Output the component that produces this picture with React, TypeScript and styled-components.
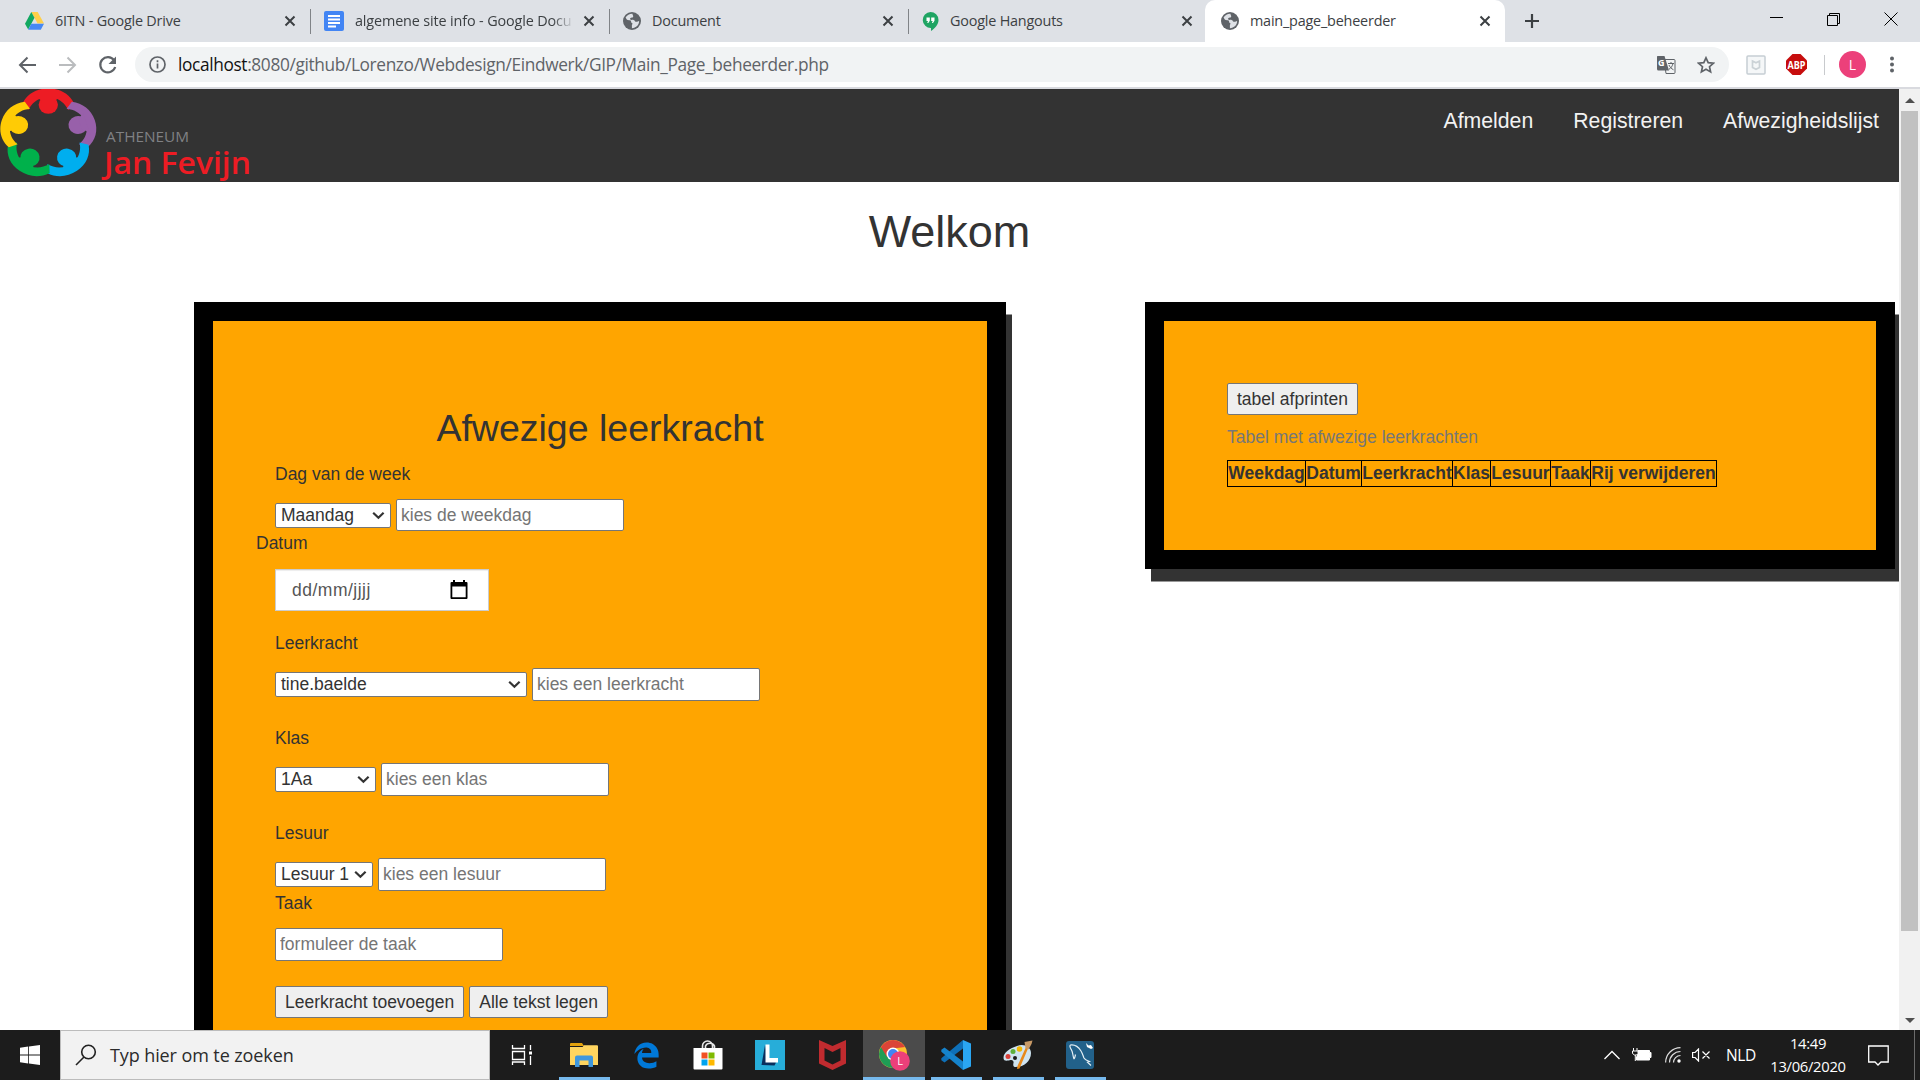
import React from "react";
import styled, { createGlobalStyle } from "styled-components";
import { FaEdgeLegacy } from "react-icons/fa6";

const Global = createGlobalStyle`
  * { box-sizing: border-box; }
  body { margin: 0; overflow: hidden; background: #fff; }
`;
const ui = `"Open Sans", "Noto Sans", sans-serif`;
const arial = `"Liberation Sans", Arial, sans-serif`;

const Screen = styled.div`
  width: 1920px; height: 1080px; display: flex; flex-direction: column; overflow: hidden;
  font-family: ${ui};
`;

/* browser chrome */
const TabStrip = styled.div`
  height: 42px; flex: none; background: #dee1e6; display: flex; padding-left: 12px;
`;
const Tab = styled.div<{ $active?: boolean; $line?: boolean }>`
  width: ${p => (p.$active ? 300 : 299)}px; height: 42px; display: flex; align-items: center;
  padding: 0 ${p => (p.$active ? 14 : 15)}px 0 ${p => (p.$active ? 16 : 13)}px; gap: 11px; color: #3c4043;
  margin-left: ${p => (p.$active ? -3 : 0)}px;
  background: ${p => (p.$active ? "#fff" : "transparent")};
  border-radius: 10px 10px 0 0;
  ${p => p.$line && `background: linear-gradient(#808387, #808387) 298px 9px / 1px 25px no-repeat; border-radius: 0;`}
  svg { flex: none; }
`;
const TabText = styled.span<{ $ls?: number; $fade?: boolean }>`
  flex: 1; font-size: 14.4px; line-height: 20px; white-space: nowrap; overflow: hidden;
  letter-spacing: ${p => p.$ls ?? -0.2}px;
  ${p => p.$fade && `-webkit-mask-image: linear-gradient(90deg, #000 91%, transparent 101%);`}
`;
const NewTab = styled.div`width: 54px; display: flex; align-items: center; justify-content: center;`;
const WinButtons = styled.div`
  margin-left: auto; display: flex; height: 37px; align-items: center;
`;
const WinButton = styled.div`width: 57px; display: flex; justify-content: center; position: relative; left: -1px;`;

const Toolbar = styled.div`
  height: 47px; flex: none; background: #fff; border-bottom: 2px solid #d9dadf;
  display: flex; align-items: center; padding: 0 15px 0 15px;
`;
const NavButtons = styled.div`display: flex; gap: 16px; width: 120px; svg { flex: none; }`;
const Omnibox = styled.div`
  width: 1594px; height: 35px; border-radius: 18px; background: #f1f3f4; display: flex; align-items: center;
  padding: 0 14px 0 14px; svg { flex: none; }
`;
const Url = styled.div`
  flex: 1; margin-left: 12px; font-size: 17.3px; letter-spacing: -0.36px; color: #5f6368; white-space: nowrap;
  b { font-weight: 400; color: #111; }
`;
const OmniIcons = styled.div`display: flex; gap: 21px; align-items: center;`;
const Extensions = styled.div`
  display: flex; align-items: center; margin-left: 17px; svg { flex: none; }
`;
const Glyph = styled.span<{ $ml: number }>`display: flex; flex: none; margin-left: ${p => p.$ml}px;`;
const ToolSep = styled.i`width: 1px; height: 20px; background: #c8cacd; margin: 0 14px 0 17px;`;
const Avatar = styled.div`
  width: 27px; height: 27px; border-radius: 50%; background: #ec407a; color: #fff; font-size: 14px;
  display: flex; align-items: center; justify-content: center; margin-right: 18px;
`;

/* page */
const Viewport = styled.div`height: 941px; flex: none; display: flex; overflow: hidden;`;
const Page = styled.div`
  width: 1899px; flex: none; overflow: hidden; font-family: ${arial}; color: #333; font-size: 17.5px; line-height: 25px;
`;
const Header = styled.header`
  height: 93px; background: #333; display: flex; justify-content: space-between; overflow: hidden;
`;
const Nav = styled.nav`
  display: flex; gap: 40px; padding: 17px 20px 0 0; color: #f2f2f2; font-size: 21.25px; line-height: 30px;
`;
const Title = styled.h1`
  margin: 25px 0 0; height: 50px; font-weight: 400; font-size: 45px; line-height: 50px; text-align: center;
`;
const Columns = styled.main`display: flex; align-items: flex-start; padding: 45px 0 0 194px; gap: 139px;`;
const Card = styled.section<{ $w: number; $h: number }>`
  width: ${p => p.$w}px; height: ${p => p.$h}px; flex: none; border: 19px solid #000; background: orange;
  box-shadow: 6px 12.5px 0 #333;
`;
const FormCard = styled(Card)`padding: 87px 62px 0;`;
const TableCard = styled(Card)`padding: 62px 63px;`;
const FormTitle = styled.h2`
  margin: 0 0 13px; font-size: 37.5px; font-weight: 400; line-height: 41px; text-align: center;
`;
const Field = styled.div<{ $after: number; $gap?: number }>`
  display: flex; flex-direction: column; align-items: flex-start; gap: ${p => p.$gap ?? 12}px;
  margin-bottom: ${p => p.$after}px;
`;
const Label = styled.label<{ $out?: boolean }>`height: 25px; margin-left: ${p => (p.$out ? -19 : 0)}px;`;
const Controls = styled.div`display: flex; align-items: center; gap: 5px;`;
const SelectBox = styled.div<{ $w: number }>`
  width: ${p => p.$w}px; height: 25px; border: 1px solid #767676; border-radius: 2px; background: #fff;
  display: flex; align-items: center; justify-content: space-between; padding: 0 5px; line-height: 21px;
  white-space: nowrap; svg { flex: none; }
`;
const Input = styled.input<{ $h?: number }>`
  width: 228px; height: ${p => p.$h ?? 33}px; border: 1px solid #767676; border-radius: 2px; padding: 0 4px;
  font: 17.5px ${arial}; background: #fff; outline: none;
  &::placeholder { color: #757575; opacity: 1; }
`;
const DateBox = styled.div`
  width: 214px; height: 42px; border: 1px solid #ccc; background: #fff; color: #555; display: flex;
  align-items: center; justify-content: space-between; padding: 0 20px 0 16px;
  box-shadow: inset 0 1px 1px rgba(0, 0, 0, 0.075);
  span { letter-spacing: 0.5px; }
`;
const Button = styled.button`
  height: 32px; border: 1px solid #767676; border-radius: 2px; background: #efefef; color: #333;
  font: 17.5px ${arial}; padding: 0 9px; white-space: nowrap;
`;
const Table = styled.table`
  border-collapse: collapse; line-height: 25px;
  caption { text-align: left; color: #777; padding: 10px 0; white-space: nowrap; }
`;
const Th = styled.th<{ $w: number }>`
  width: ${p => p.$w}px; min-width: ${p => p.$w}px; border: 1px solid #000; padding: 0; font-weight: 700;
  white-space: nowrap;
`;
const Scrollbar = styled.div`
  width: 21px; background: #f1f1f1; display: flex; flex-direction: column; align-items: center; padding: 9px 0 7px;
`;
const Thumb = styled.div`width: 17px; height: 820px; background: #c1c1c1; margin: 8px 0 auto;`;
const Arrow = styled.i<{ $down?: boolean }>`
  border: 5px solid transparent; border-top-width: ${p => (p.$down ? 5 : 0)}px;
  border-bottom-width: ${p => (p.$down ? 0 : 5)}px;
  ${p => (p.$down ? "border-top-color" : "border-bottom-color")}: #505050;
`;

/* taskbar */
const Taskbar = styled.footer`
  height: 50px; flex: none; background: #1c1c1c; display: flex; color: #fff;
`;
const Start = styled.div`width: 60px; display: flex; align-items: center; justify-content: center;`;
const Search = styled.div`
  width: 430px; height: 50px; border: 1px solid #bcbcbc; background: #f2f2f2; display: flex; align-items: center;
  padding-left: 14px; gap: 13px; color: #2b2b2b; font-size: 18px; letter-spacing: -0.1px;
`;
const AppButton = styled.div<{ $open?: boolean; $active?: boolean }>`
  width: 62px; height: 50px; display: flex; align-items: center; justify-content: center;
  background: ${p => (p.$active ? "#4b4b4b" : "transparent")};
  ${p => p.$open && `background: linear-gradient(#76b9ed, #76b9ed) 6px 47px / 51px 3px no-repeat;`}
  ${p => p.$active && `border-bottom: 3px solid #76b9ed; padding-top: 3px;`}
`;
const Apps = styled.div`display: flex; padding-left: 1px;`;
const Tray = styled.div`
  margin-left: auto; display: flex; align-items: center; font-size: 15px; svg { flex: none; }
`;
const Lang = styled.span`width: 30px; margin-left: 15px; letter-spacing: -0.4px; font-size: 15.5px;`;
const Clock = styled.div`
  width: 84px; margin-left: 10px; text-align: center; line-height: 23px; font-size: 14.8px; letter-spacing: -0.3px;
  white-space: nowrap;
`;
const ShowDesktop = styled.i`height: 50px; width: 6px; border-left: 1px solid #6b6b6b; margin-left: 25px;`;

const Close = () => (
  <svg width="12" height="12" viewBox="0 0 12 12"><path d="M1.5 1.5l9 9M10.500 1.500l-9 9" stroke="#3c4043" strokeWidth="2" /></svg>
);
const Globe = () => (
  <svg width="18" height="18" viewBox="0 0 18 18">
    <circle cx="9" cy="9" r="9" fill="#5f6368" />
    <path d="M9.5 1.8C7 1.6 4 3 2.6 5.6c.8 1 .7 2.200 2 2.500 1.500.3 2.500-.3 3.300.8.6 1-.3 1.500 1 2 .8.3.6 1 .2 1.700-.5 1 0 2.200-.2 3.600 4.200-.2 7.300-3.400 7.200-7.200-1.400.3-2 1.100-3.300.7-1.200-.4-1-1.600-2.300-1.800-1.500-.2-2.800.5-3.300-.6-.4-1 .5-1.800 1.700-1.800.9 0 1.400-.3 1.300-1.200-.1-.9-.8-1.500-.7-2.500z" fill="#dee1e6" />
  </svg>
);
const Drive = () => (
  <svg width="19" height="18" viewBox="0 0 19 18">
    <path d="M6.300 0h6.400l6.300 11.500h-6.400z" fill="#ffcf48" />
    <path d="M6.300 0L9.500 5.800 3.200 17.500 0 11.800z" fill="#11a861" />
    <path d="M6.300 11.800H19L15.800 17.800H3.200z" fill="#4688f4" />
  </svg>
);
const Docs = () => (
  <svg width="20" height="20" viewBox="0 0 20 20"><rect width="20" height="20" rx="2" fill="#4285f4" />
    <path d="M4 5h12M4 8.500h12M4 12h12M4 15.500h8" stroke="#fff" strokeWidth="1.900" /></svg>
);
const Hangouts = () => (
  <svg width="17" height="19" viewBox="0 0 17 19"><path d="M8.500 0a8 8 0 0 1 8 8c0 4.500-3.500 8.500-7.500 11v-3A8 8 0 1 1 8.500 0z" fill="#1fa463" />
    <path d="M4.500 5.500h3.300v3.300l-1.500 2.200H5.200l.8-2H4.500zM9.200 5.500h3.300v3.300L11 11H9.900l.8-2H9.200z" fill="#fff" /></svg>
);
const Chevron = () => (
  <svg width="13" height="9" viewBox="0 0 13 9"><path d="M1.200 1.700l5.200 5 5.200-5" fill="none" stroke="#333" strokeWidth="2.200" /></svg>
);

const people = [
  { fill: "#ed1c24", turn: 0 }, { fill: "#9860aa", turn: 72 }, { fill: "#00aeef", turn: 144 },
  { fill: "#00b14b", turn: 216 }, { fill: "#ffcb05", turn: 288 },
];
const Logo = () => (
  <svg width="256" height="93" viewBox="0 0 256 93">
    <g transform="translate(48.300 45) scale(1.050 0.980)">
      {people.map(p => (
        <g key={p.turn} fill={p.fill} transform={`rotate(${p.turn})`}>
          <circle cx="0" cy="-29.800" r="9.200" />
          <path d="M-24.500-31.500C-20-41-11-46.500 0-46.500S20-41 24.500-31.500L19-24.500C16-31 11.500-35 5-37H-5C-11.500-35-16-31-19-24.500Z" />
          <path d="M-14-38H14C9-37 7-35 6-32H-6C-7-35-9-37-14-38Z" />
        </g>
      ))}
    </g>
    <text x="106" y="53" fontFamily={ui} fontSize="15" fill="#808184" textLength="83" lengthAdjust="spacingAndGlyphs">ATHENEUM</text>
    <text x="104" y="84.500" fontFamily={ui} fontSize="30.500" fontWeight="650" fill="#ed1c24" textLength="147" lengthAdjust="spacingAndGlyphs">Jan Fevijn</text>
  </svg>
);

const Select = ({ w, children }: { w: number; children: React.ReactNode }) => (
  <SelectBox $w={w}><span>{children}</span><Chevron /></SelectBox>
);

const columns = [
  { name: "Weekdag", w: 78 }, { name: "Datum", w: 56 }, { name: "Leerkracht", w: 91 }, { name: "Klas", w: 38 },
  { name: "Lesuur", w: 60 }, { name: "Taak", w: 40 }, { name: "Rij verwijderen", w: 126 },
];

export default function App() {
  return (
    <Screen>
      <Global />
      <TabStrip>
        <Tab $line><Drive /><TabText>6ITN - Google Drive</TabText><Close /></Tab>
        <Tab $line><Docs /><TabText $fade $ls={-0.14}>algemene site info - Google Docu</TabText><Close /></Tab>
        <Tab $line><Globe /><TabText>Document</TabText><Close /></Tab>
        <Tab><Hangouts /><TabText>Google Hangouts</TabText><Close /></Tab>
        <Tab $active><Globe /><TabText>main_page_beheerder</TabText><Close /></Tab>
        <NewTab><svg width="16" height="16"><path d="M8 1v14M1 8h14" stroke="#3c4043" strokeWidth="2.200" /></svg></NewTab>
        <WinButtons>
          <WinButton><svg width="13" height="13"><path d="M0 5.500h13" stroke="#000" /></svg></WinButton>
          <WinButton><svg width="14" height="14" fill="none" stroke="#000"><path d="M.5 3.500h10v10H.5zM2.500 3.500v-2h10v10h-2" /></svg></WinButton>
          <WinButton><svg width="14" height="14" stroke="#000"><path d="M.5.5l13 13M13.500.5l-13 13" /></svg></WinButton>
        </WinButtons>
      </TabStrip>
      <Toolbar>
        <NavButtons>
          <svg width="24" height="24" fill="none" stroke="#5f6368" strokeWidth="2"><path d="M21 12H5.500M12.500 4.500L5 12l7.500 7.500" /></svg>
          <svg width="24" height="24" fill="none" stroke="#babcbe" strokeWidth="2"><path d="M4 12h15.500M12.500 4.500L20 12l-7.500 7.500" /></svg>
          <svg width="24" height="24" fill="none" stroke="#5f6368" strokeWidth="2.200"><path d="M19 7.200A7.600 7.600 0 1 0 20.200 14" /><path d="M21 3.500V11h-7.500z" fill="#5f6368" stroke="none" /></svg>
        </NavButtons>
        <Omnibox>
          <svg width="17" height="17" fill="none" stroke="#5f6368" strokeWidth="1.700"><circle cx="8.500" cy="8.500" r="7.500" /><path d="M8.500 7.500v5M8.500 4.300v2" /></svg>
          <Url><b>localhost</b>:8080/github/Lorenzo/Webdesign/Eindwerk/GIP/Main_Page_beheerder.php</Url>
          <OmniIcons>
            <svg width="20" height="20" viewBox="0 0 20 20"><path d="M8 4.500h10a1 1 0 0 1 1 1V17.500a1 1 0 0 1-1 1H10z" fill="#f1f3f4" stroke="#5f6368" /><path d="M1.500 1h7l4.500 14.500H2.500A1.500 1.500 0 0 1 1 14V1.500z" fill="#5f6368" /><text x="2" y="11" fontSize="9" fontWeight="700" fontFamily={ui} fill="#fff">G</text><path d="M12 8.500h6M15 7v1.500M17 8.500c-.5 2.500-2 4.500-4 5.800M13 10c.8 2 2.200 3.500 4.500 4.800" fill="none" stroke="#5f6368" /></svg>
            <svg width="18" height="18" viewBox="0 0 18 18" fill="none" stroke="#5f6368" strokeWidth="1.700"><path d="M9 1.800l2.200 4.800 5.200.6-3.900 3.500 1.100 5.200L9 13.300l-4.600 2.600 1.100-5.200L1.600 7.200l5.200-.6z" /></svg>
          </OmniIcons>
        </Omnibox>
        <Extensions>
          <svg width="20" height="20" fill="none"><rect x="1" y="1" width="18" height="18" rx="1" fill="#f5f7f8" stroke="#c6ced3" strokeWidth="1.500" /><path d="M6.500 6l3.500 1.700L13.500 6v6.500L10 14.300l-3.500-1.800z" stroke="#cbd2d6" strokeWidth="1.700" /></svg>
          <Glyph $ml={20}><svg width="21" height="21" viewBox="0 0 21 21"><path d="M6.500 0h8L21 6.500v8L14.500 21h-8L0 14.500v-8z" fill="#c70d0d" /><text x="10.500" y="14.500" textAnchor="middle" fontSize="11" fontWeight="700" fontFamily={ui} fill="#fff" textLength="18" lengthAdjust="spacingAndGlyphs">ABP</text></svg></Glyph>
          <ToolSep />
          <Avatar>L</Avatar>
          <svg width="16" height="20" fill="#5f6368"><circle cx="8" cy="3.500" r="2" /><circle cx="8" cy="9.500" r="2" /><circle cx="8" cy="15.500" r="2" /></svg>
        </Extensions>
      </Toolbar>

      <Viewport>
        <Page>
          <Header>
            <Logo />
            <Nav><span>Afmelden</span><span>Registreren</span><span>Afwezigheidslijst</span></Nav>
          </Header>
          <Title>Welkom</Title>
          <Columns>
            <FormCard $w={812} $h={900}>
              <FormTitle>Afwezige leerkracht</FormTitle>
              <Field $after={0}>
                <Label>Dag van de week</Label>
                <Controls><Select w={116}>Maandag</Select><Input $h={32} placeholder="kies de weekdag" /></Controls>
              </Field>
              <Field $after={20} $gap={13}>
                <Label $out>Datum</Label>
                <DateBox><span>dd/mm/jjjj</span>
                  <svg width="18" height="20" viewBox="0 0 18 20"><path d="M3 0h2v2h8V0h2v2h1.500a1 1 0 0 1 1 1v15a1 1 0 0 1-1 1h-15a1 1 0 0 1-1-1V3a1 1 0 0 1 1-1H3zM2.300 6.500v10.700h13.400V6.500z" fill="#000" /></svg>
                </DateBox>
              </Field>
              <Field $after={25}>
                <Label>Leerkracht</Label>
                <Controls><Select w={252}>tine.baelde</Select><Input placeholder="kies een leerkracht" /></Controls>
              </Field>
              <Field $after={25}>
                <Label>Klas</Label>
                <Controls><Select w={101}>1Aa</Select><Input placeholder="kies een klas" /></Controls>
              </Field>
              <Field $after={0}>
                <Label>Lesuur</Label>
                <Controls><Select w={98}>Lesuur 1</Select><Input placeholder="kies een lesuur" /></Controls>
              </Field>
              <Field $after={25}>
                <Label>Taak</Label>
                <Input placeholder="formuleer de taak" />
              </Field>
              <Controls><Button>Leerkracht toevoegen</Button><Button>Alle tekst legen</Button></Controls>
            </FormCard>
            <TableCard $w={750} $h={267}>
              <Button>tabel afprinten</Button>
              <Table>
                <caption>Tabel met afwezige leerkrachten</caption>
                <thead><tr>{columns.map(c => <Th key={c.name} $w={c.w}>{c.name}</Th>)}</tr></thead>
              </Table>
            </TableCard>
          </Columns>
        </Page>
        <Scrollbar><Arrow /><Thumb /><Arrow $down /></Scrollbar>
      </Viewport>

      <Taskbar>
        <Start><svg width="20" height="20" viewBox="0 0 20 20" fill="#fff"><path d="M0 2.800L8.200 1.600v8H0zM9 1.500L20 0v9.600H9zM0 10.400h8.200v8L0 17.300zM9 10.400h11V20L9 18.500z" /></svg></Start>
        <Search>
          <svg width="22" height="22" fill="none" stroke="#222" strokeWidth="1.600"><circle cx="13.500" cy="8" r="6.800" /><path d="M9 13L1 21" /></svg>
          Typ hier om te zoeken
        </Search>
        <Apps>
          <AppButton><svg width="22" height="20" fill="none" stroke="#fff" strokeWidth="1.300"><path d="M1.500 0v3.500h12V0M1.500 6.500h12v8h-12zM1.500 20v-3h12v3M19.500 0v5M19.500 11v9" /><path d="M18 6.500h3v3h-3z" fill="#fff" stroke="none" /></svg></AppButton>
          <AppButton $open><svg width="28" height="26" viewBox="0 0 28 26"><path d="M0 2a1 1 0 0 1 1-1h11l2 3H0z" fill="#e3a20c" /><path d="M0 5h12.500l1.500-1.700h13a1 1 0 0 1 1 1V23H0z" fill="#ffd55f" /><path d="M5 25V15.500a2 2 0 0 1 2-2h14a2 2 0 0 1 2 2V25h-4.500v-6.500h-9V25z" fill="#3f97dd" /></svg></AppButton>
          <AppButton><FaEdgeLegacy size={27} color="#0078d7" /></AppButton>
          <AppButton><svg width="30" height="30" viewBox="0 0 30 30"><path d="M9.500 8V6a5 5 0 0 1 10 0v2M12.500 8V6a5 5 0 0 1 9 0v2" fill="none" stroke="#e8e8e8" strokeWidth="1.600" /><path d="M.5 8h29v20.500a1 1 0 0 1-1 1h-27a1 1 0 0 1-1-1z" fill="#fff" /><path d="M8.500 12.500h6v6h-6z" fill="#f25022" /><path d="M15.500 12.500h6v6h-6z" fill="#7fba00" /><path d="M8.500 19.500h6v6h-6z" fill="#00a4ef" /><path d="M15.500 19.500h6v6h-6z" fill="#ffb900" /></svg></AppButton>
          <AppButton><svg width="30" height="30" viewBox="0 0 30 30"><path d="M0 0h30v30H0z" fill="#27add9" /><path d="M10 5L6.500 25l13 .5 1.500-3-8-4z" fill="#0a2e5c" /><path d="M10.500 4.500h4v13.500h8.500v4.500H10.500z" fill="#fff" /></svg></AppButton>
          <AppButton><svg width="27" height="30" viewBox="0 0 27 30"><path d="M0 0l13.500 6L27 0v23.500L13.500 30 0 23.500zM5.500 8v12.500l8 4 8-4V8l-8 4z" fill="#c02b2f" fillRule="evenodd" /></svg></AppButton>
          <AppButton $active>
            <svg width="32" height="32" viewBox="0 0 32 32">
              <circle cx="15" cy="15" r="14" fill="#fbc02d" />
              <path d="M15 15L2.900 8A14 14 0 0 0 15 29l6-7z" fill="#1f9d55" />
              <path d="M2.900 8a14 14 0 0 1 24.200 0L15 9.500l-6 8.500z" fill="#db4437" />
              <circle cx="15" cy="15" r="6.500" fill="#fff" /><circle cx="15" cy="15" r="5" fill="#4285f4" />
              <circle cx="22" cy="22" r="9.800" fill="#ec407a" /><text x="22" y="26" textAnchor="middle" fontFamily={ui} fontSize="11" fill="#fff">L</text>
            </svg>
          </AppButton>
          <AppButton $open><svg width="30" height="30" viewBox="0 0 30 30"><path d="M22 0v8.500L3.500 22.500.3 20.300v-2z" fill="#0e70b8" /><path d="M22 30v-8.500L3.500 7.500.3 9.700v2z" fill="#1583cc" /><path d="M22 0l8 3.500v23L22 30z" fill="#2aa6f2" /></svg></AppButton>
          <AppButton $open>
            <svg width="30" height="30" viewBox="0 0 30 30">
              <path d="M14 6C21 3 28 7 28 13c0 8-7 14-15 14-3 0-3-2-2.500-4s-1-3.500-3-3-7 2-7-2C.5 12 7 8.500 14 6z" fill="#cfe4f1" />
              <circle cx="5" cy="16.500" r="2.500" fill="#d9403a" /><circle cx="10" cy="11.500" r="2.500" fill="#5db03c" /><circle cx="16.500" cy="9" r="2.800" fill="#f2b705" /><circle cx="12" cy="18" r="2" fill="#1c1c1c" />
              <path d="M23 7l2 1.500-8.500 20-2.500.5.500-3z" fill="#e88a1c" /><path d="M21.500 2l8-1.500-1 3.500-3 5.500-3-1.500z" fill="#c89a66" />
            </svg>
          </AppButton>
          <AppButton $open>
            <svg width="28" height="28" viewBox="0 0 28 28"><rect width="28" height="28" rx="3" fill="#22618a" /><path d="M8 18C6.500 14 7 11.500 5.500 9 4 6.500 3 5 4.500 4c4-.5 8 2 10.500 6 1.500 2.500 2 4.500 3 7 1 2 3 2.500 5.500 3.500l-2 .8 3.500 3.200M8 18c1-1.500 1-2.500 1.500-4.500" fill="none" stroke="#e6f0f5" strokeWidth="1.200" /><path d="M20 2l2.500 2.500L25 4l2 3-2 1-4-2z" fill="#fff" /></svg>
          </AppButton>
        </Apps>
        <Tray>
          <svg width="16" height="10" fill="none" stroke="#fff" strokeWidth="1.300"><path d="M.5 9L8 1.500 15.500 9" /></svg>
          <Glyph $ml={12}><svg width="20" height="14" viewBox="0 0 20 14"><path d="M6 2.500h11.500v2H19v5h-1.500v2.500H4.500V8.500" fill="#fff" stroke="#fff" /><path d="M1.500 0v3M5 0v3M.5 3h5.500v2.500L4.500 7h-2L.5 5.500zM3.300 7v6" fill="#1c1c1c" stroke="#fff" /></svg></Glyph>
          <Glyph $ml={13}><svg width="16" height="16" fill="none" stroke="#ddd" strokeWidth="1.200"><path d="M.6 15.500A15 15 0 0 1 15.500.6M4.500 15.500a11 11 0 0 1 11-11M8.500 15.500a7 7 0 0 1 7-7" /><circle cx="14" cy="14" r="1.700" fill="#fff" stroke="none" /></svg></Glyph>
          <Glyph $ml={11}><svg width="19" height="14" fill="none" stroke="#fff" strokeWidth="1.200"><path d="M.6 4.500h2.500L6.500 1v12L3.100 9.500H.6zM10.500 3.500l7 7M17.500 3.500l-7 7" /></svg></Glyph>
          <Lang>NLD</Lang>
          <Clock>14:49<br />13/06/2020</Clock>
          <Glyph $ml={18}><svg width="21" height="21" fill="none" stroke="#fff" strokeWidth="1.300"><path d="M.7 1h19.500v16H13l-3 3-3-3H.7z" /></svg></Glyph>
          <ShowDesktop />
        </Tray>
      </Taskbar>
    </Screen>
  );
}
